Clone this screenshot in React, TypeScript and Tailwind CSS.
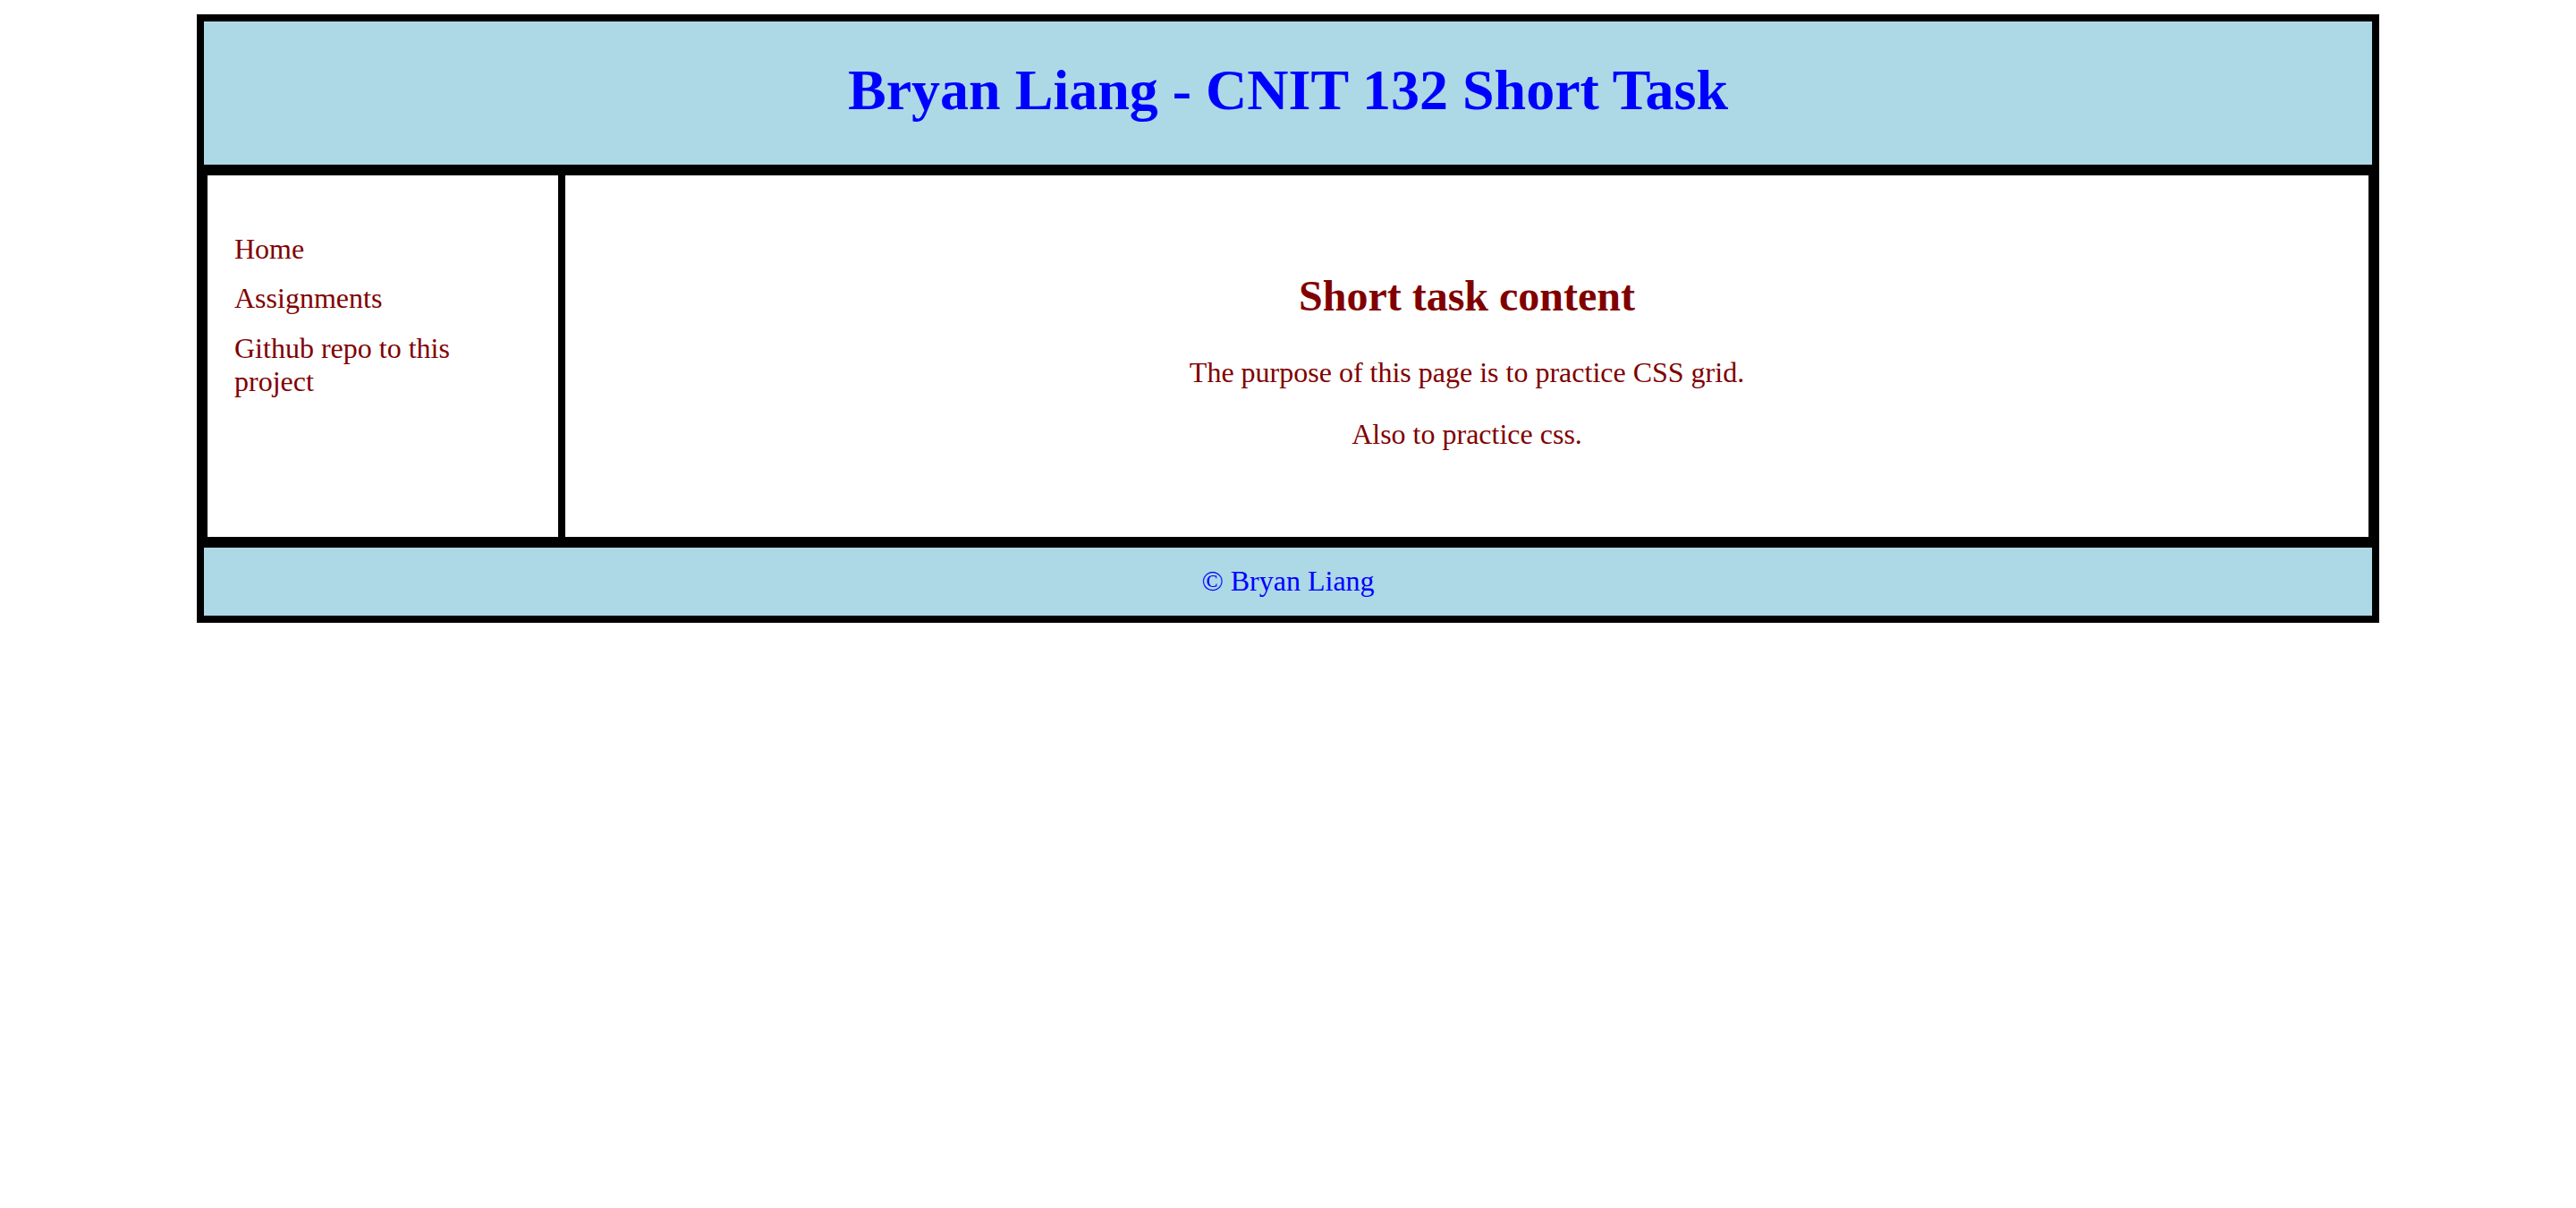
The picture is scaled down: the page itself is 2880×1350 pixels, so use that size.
import React from 'react';

const navLinks = ['Home', 'Assignments', 'Github repo to this project'];

const App: React.FC = () => {
  return (
    <div className="min-h-screen bg-white pt-[16px] font-['Liberation_Serif','Times_New_Roman',serif]">
      {/* page frame: black border + black row gaps */}
      <div className="mx-auto grid w-[2440px] grid-cols-[400px_1fr] gap-y-[8px] border-[8px] border-black bg-black">
        <header className="col-span-2 h-[160px] bg-[#add8e6] pt-[40px] text-center">
          <h1 className="text-[64px] font-bold leading-[73.6px] text-[#0000ff]">
            Bryan Liang - CNIT 132 Short Task
          </h1>
        </header>

        <nav className="border-[4px] border-black bg-white px-[30px] pt-[64px]">
          <ul className="flex flex-col gap-[18.7px]">
            {navLinks.map((link) => (
              <li key={link}>
                <a href="#" className="text-[32px] leading-[36.8px] text-[#800000]">
                  {link}
                </a>
              </li>
            ))}
          </ul>
        </nav>

        <main className="border-[4px] border-black bg-white pb-[65px] pt-[67px] text-center text-[#800000]">
          <h2 className="mb-[39.84px] mt-[39.84px] text-[48px] font-bold leading-[55.2px]">
            Short task content
          </h2>
          <p className="my-[32px] text-[32px] leading-[36.8px]">
            The purpose of this page is to practice CSS grid.
          </p>
          <p className="my-[32px] text-[32px] leading-[36.8px]">Also to practice css.</p>
        </main>

        <footer className="col-span-2 bg-[#add8e6] pb-[20px] pt-[19px] text-center">
          <p className="text-[32px] leading-[36.8px] text-[#0000ff]">&copy; Bryan Liang</p>
        </footer>
      </div>
    </div>
  );
};

export default App;
